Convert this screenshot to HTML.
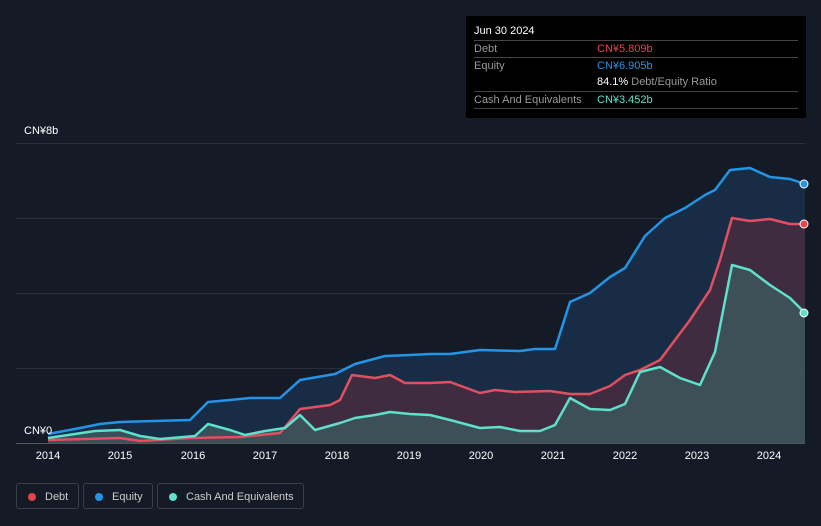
<!DOCTYPE html>
<html><head><meta charset="utf-8"><style>
body{margin:0;width:821px;height:526px;background:#151b26;font-family:"Liberation Sans",sans-serif;overflow:hidden;position:relative;color:#fff}
.tip{position:absolute;left:466px;top:16px;width:340px;height:102px;background:#000}
.tip .t{position:absolute;left:8px;top:9px;font-size:11px;color:#fff}
.row{position:absolute;left:8px;width:324px;height:16px;border-top:1px solid #444;font-size:11px;color:#999;line-height:16px}
.row span{position:absolute;left:123px}
.leg{position:absolute;top:483px;height:26px;border:1px solid #3a404a;border-radius:3px;font-size:11px;color:#ccc;line-height:26px;box-sizing:border-box}
.leg i{position:absolute;left:11px;top:9px;width:8px;height:8px;border-radius:50%}
.ax{position:absolute;top:450px;font-size:11px;color:#fff;width:40px;text-align:center}
</style></head><body>
<div class="tip">
<div class="t">Jun 30 2024</div>
<div class="row" style="top:24px">Debt<span style="color:#e5444c">CN¥5.809b</span></div>
<div class="row" style="top:41px">Equity<span style="color:#2394e6">CN¥6.905b</span></div>
<div class="row" style="top:58px;border-top:none"><span style="color:#fff">84.1% <b style="font-weight:normal;color:#999">Debt/Equity Ratio</b></span></div>
<div class="row" style="top:75px">Cash And Equivalents<span style="color:#5ee0cc">CN¥3.452b</span></div>
<div class="row" style="top:92px;height:0"></div>
</div>
<div style="position:absolute;left:24px;top:125px;font-size:11px">CN¥8b</div>
<svg style="position:absolute;left:0;top:0" width="821" height="526">
<g stroke="#2a303a" stroke-width="1"><line x1="16" y1="143.5" x2="805" y2="143.5"/><line x1="16" y1="218.5" x2="805" y2="218.5"/><line x1="16" y1="293.5" x2="805" y2="293.5"/><line x1="16" y1="368.5" x2="805" y2="368.5"/></g>
<line x1="16" y1="443.5" x2="805" y2="443.5" stroke="#555"/>
<polygon fill="#183049" opacity="0.9" points="48,443 48,434 80,428 100,424 120,422 190,420 208,402 230,400 250,398 280,398 300,380 335,374 355,364 385,356 410,355 430,354 450,354 480,350 520,351 535,349 555,349 570,302 590,293 610,277 625,268 645,236 665,218 685,208 705,195 715,190 730,170 750,168 770,177 790,179 805,184 805,443"/>
<polygon fill="#4a2c40" opacity="0.8" points="48,443 48,440 120,438 140,441 190,438 240,437 280,433 300,409 330,405 340,400 352,375 375,378 390,375 405,383 430,383 450,382 480,393 495,390 515,392 550,391 570,394 590,394 610,386 625,375 640,370 660,360 690,320 710,290 720,260 732,218 750,221 770,219 790,224 805,224 805,443"/>
<polygon fill="#3d5a5e" opacity="0.8" points="48,443 48,438 95,431 120,430 140,436 160,439 195,436 208,424 230,430 245,435 265,431 285,428 300,415 315,430 340,423 355,418 375,415 390,412 410,414 430,415 450,420 480,428 500,427 520,431 540,431 555,425 570,398 590,409 610,410 625,404 640,372 660,367 680,378 700,385 715,352 732,265 750,270 770,285 790,298 805,313 805,443"/>
<g fill="none" stroke-width="2.5" stroke-linejoin="round">
<polyline stroke="#2394e6" points="48,434 80,428 100,424 120,422 190,420 208,402 230,400 250,398 280,398 300,380 335,374 355,364 385,356 410,355 430,354 450,354 480,350 520,351 535,349 555,349 570,302 590,293 610,277 625,268 645,236 665,218 685,208 705,195 715,190 730,170 750,168 770,177 790,179 805,184"/>
<polyline stroke="#e05060" points="48,440 120,438 140,441 190,438 240,437 280,433 300,409 330,405 340,400 352,375 375,378 390,375 405,383 430,383 450,382 480,393 495,390 515,392 550,391 570,394 590,394 610,386 625,375 640,370 660,360 690,320 710,290 720,260 732,218 750,221 770,219 790,224 805,224"/>
<polyline stroke="#5ee0cc" points="48,438 95,431 120,430 140,436 160,439 195,436 208,424 230,430 245,435 265,431 285,428 300,415 315,430 340,423 355,418 375,415 390,412 410,414 430,415 450,420 480,428 500,427 520,431 540,431 555,425 570,398 590,409 610,410 625,404 640,372 660,367 680,378 700,385 715,352 732,265 750,270 770,285 790,298 805,313"/>
</g>
<circle cx="804" cy="184" r="4" fill="#2394e6" stroke="#fff" stroke-width="1"/>
<circle cx="804" cy="224" r="4" fill="#e5444c" stroke="#fff" stroke-width="1"/>
<circle cx="804" cy="313" r="4" fill="#5ee0cc" stroke="#fff" stroke-width="1"/>
</svg>
<div style="position:absolute;left:24px;top:425px;font-size:11px">CN¥0</div>
<div class="ax" style="left:28px">2014</div><div class="ax" style="left:100px">2015</div><div class="ax" style="left:173px">2016</div><div class="ax" style="left:245px">2017</div><div class="ax" style="left:317px">2018</div><div class="ax" style="left:389px">2019</div><div class="ax" style="left:461px">2020</div><div class="ax" style="left:533px">2021</div><div class="ax" style="left:605px">2022</div><div class="ax" style="left:677px">2023</div><div class="ax" style="left:749px">2024</div>
<div class="leg" style="left:16px;width:63px"><i style="background:#e5444c"></i><span style="position:absolute;left:28px">Debt</span></div>
<div class="leg" style="left:83px;width:70px"><i style="background:#2394e6"></i><span style="position:absolute;left:28px">Equity</span></div>
<div class="leg" style="left:157px;width:147px"><i style="background:#5ee0cc"></i><span style="position:absolute;left:28px">Cash And Equivalents</span></div>
</body></html>
